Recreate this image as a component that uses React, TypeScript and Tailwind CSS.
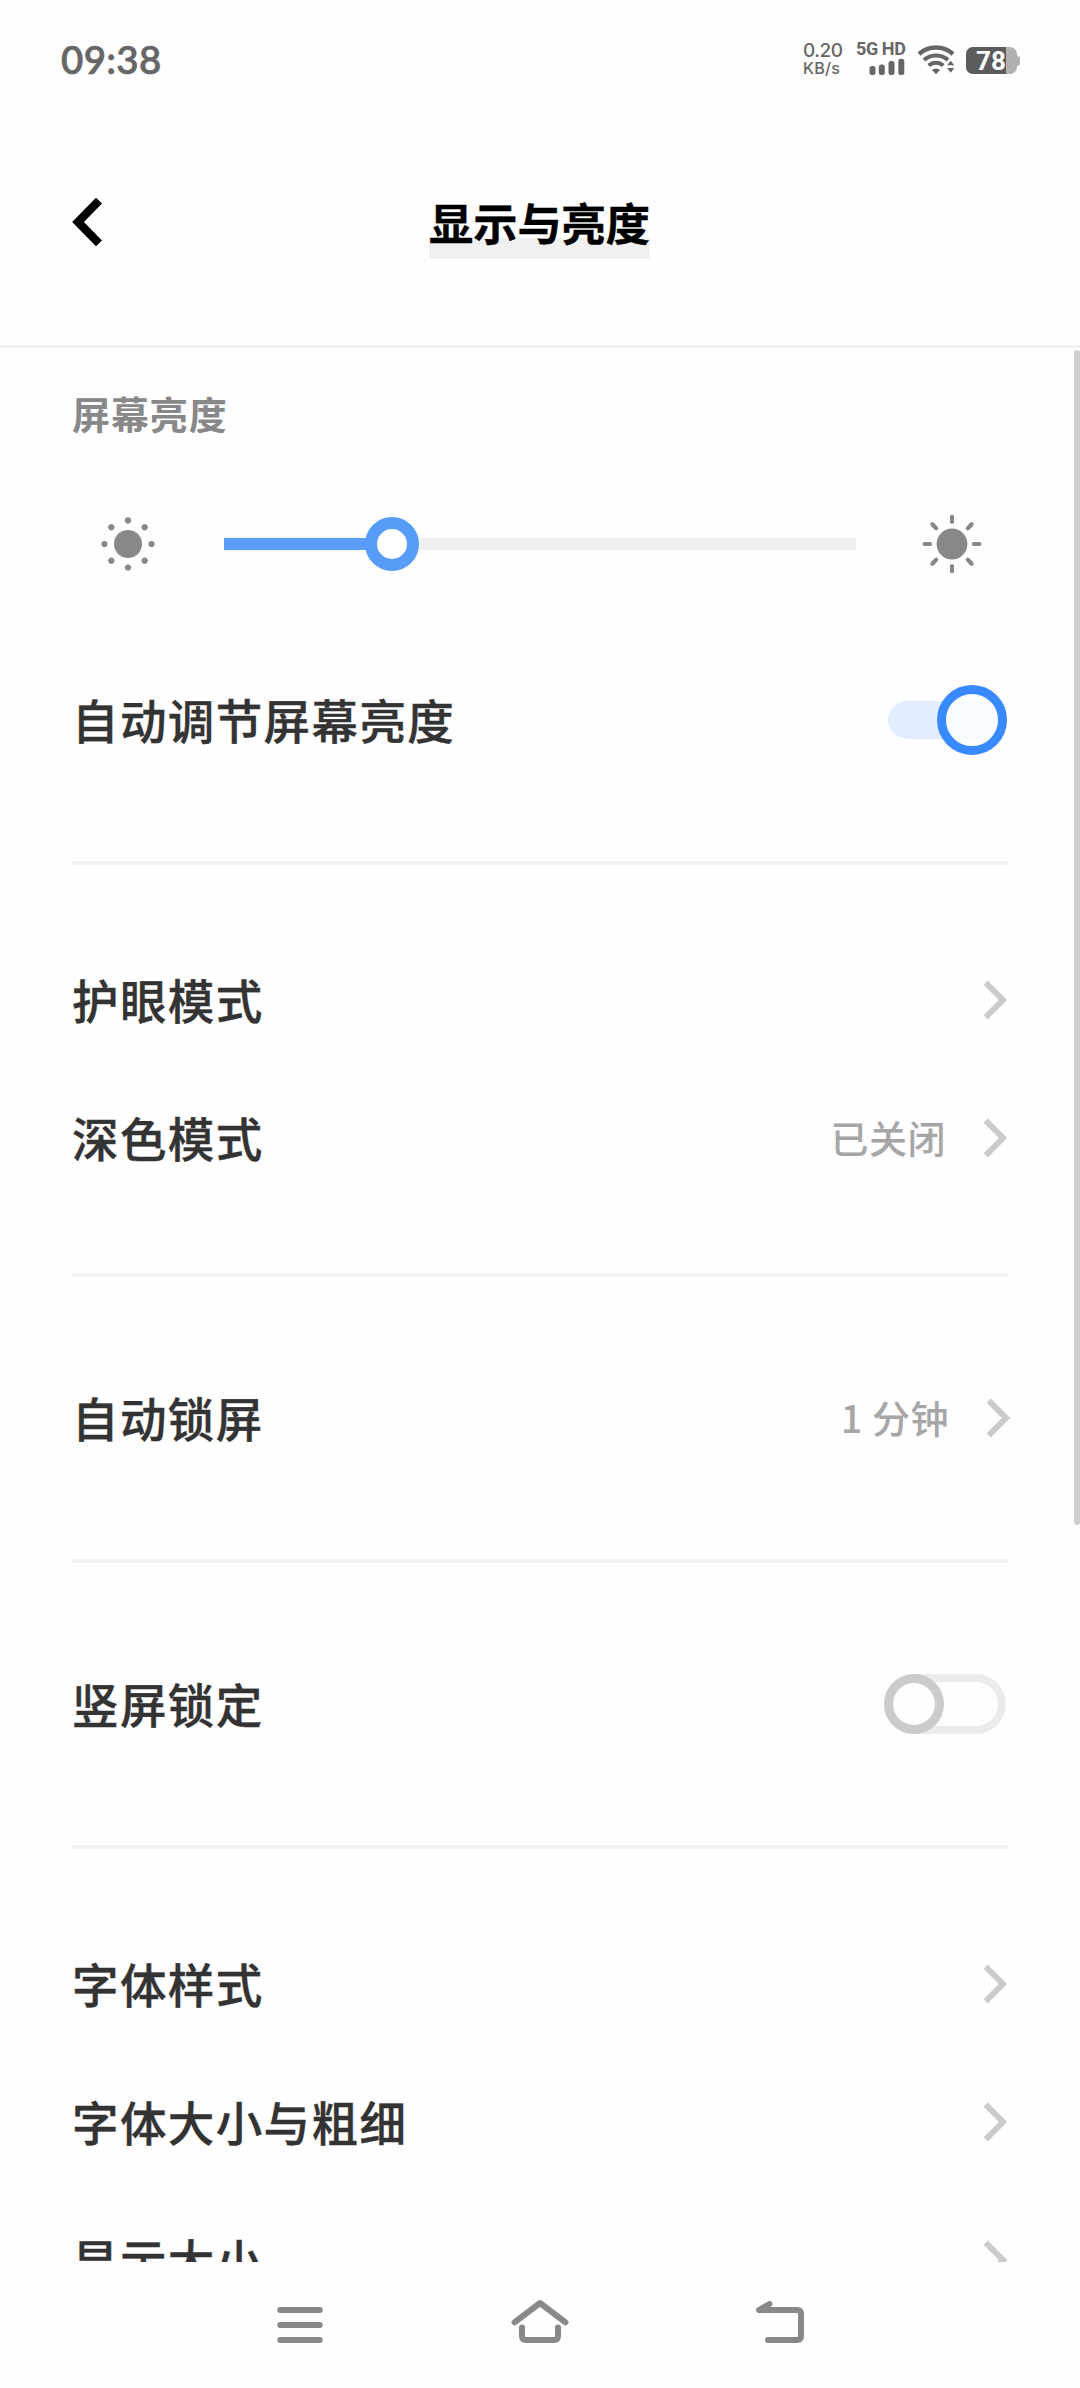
import React from 'react';
import classNames from 'clsx';

type RowProps = {
    label: string;
    value?: string;
    shifted?: boolean;
    children?: React.ReactNode;
};

function Chevron() {
    return (
        <svg width="25" height="42" viewBox="0 0 25 42" fill="none" className="shrink-0">
            <path d="M2.7 3.7L20 21L2.7 38.3" stroke="#cbcbcb" strokeWidth="6" />
        </svg>
    );
}

function Row({ label, value, shifted, children }: RowProps) {
    return (
        <div className="flex h-[138px] items-center justify-between">
            <p className="pb-[1px] text-[46.5px] leading-none font-medium tracking-[1.4px] text-[#333333] [-webkit-text-stroke:0.4px_#333333]">
                {label}
            </p>
            {children || (
                <div className={classNames('flex items-center gap-[37px]', shifted && '-mr-[3px]')}>
                    {value && (
                        <p className="pb-[2px] text-[38px] leading-none font-medium tracking-[0.5px] text-[#a6a6a6]">{value}</p>
                    )}
                    <Chevron />
                </div>
            )}
        </div>
    );
}

function Divider() {
    return <div className="h-1 bg-[#f4f4f4]" />;
}

function StatusBar() {
    return (
        <div className="flex h-[120px] justify-between px-[60px] text-[#666666]">
            <p className="mt-[35px] ml-[1px] font-['Lato'] text-[38.5px] leading-[48px] font-semibold tracking-[0.3px] [-webkit-text-stroke:0.6px_#666666]">
                09:38
            </p>
            <div className="flex">
                <div className="mt-[42px] w-[54px] font-['Inter'] font-medium">
                    <p className="-ml-[1px] text-[19px] leading-[18px] tracking-[-0.5px]">0.20</p>
                    <p className="-ml-[1px] text-[16px] leading-[16px] tracking-[0.3px]">KB/s</p>
                </div>
                <div className="mt-[40px] flex w-[60px] flex-col">
                    <p className="-ml-[2px] font-['Roboto'] text-[18px] leading-[18px] font-bold tracking-[-0.4px] whitespace-nowrap">
                        5G HD
                    </p>
                    <svg width="36" height="17" viewBox="0 0 36 17" fill="#666666" className="ml-[11px]">
                        <rect x="0.5" y="8" width="6" height="9" rx="2.5" />
                        <rect x="9.8" y="6.5" width="6" height="10.5" rx="2.5" />
                        <rect x="19.5" y="3" width="6" height="14" rx="2.5" />
                        <rect x="29.3" y="0.7" width="6" height="16.3" rx="2.5" />
                    </svg>
                </div>
                <svg width="40" height="32" viewBox="0 0 40 32" fill="none" className="mt-[44px] -ml-[1px]">
                    <path d="M2 10A25.5 25.5 0 0 1 36 10" stroke="#666666" strokeWidth="4.4" />
                    <path d="M7 16A18 18 0 0 1 31 16" stroke="#666666" strokeWidth="4" />
                    <path d="M11.7 21.5A10.8 10.8 0 0 1 26.3 21.5" stroke="#666666" strokeWidth="4" />
                    <path d="M15 26Q19 23 23 26L19 30.2Z" fill="#666666" />
                    <path d="M33.7 16.7L37.3 21.2H30.1ZM33.7 28.7L37.3 24H30.1Z" fill="#666666" stroke="#fefefe" strokeWidth="3" paintOrder="stroke" />
                </svg>
                <div className="mt-[47px] ml-[9px] flex items-center self-start">
                    <div className="flex h-[27px] w-[51px] items-center rounded-[7px] bg-[#b0b0b0]">
                        <div className="h-full w-[40px] rounded-l-[7px] bg-[#5c5c5c] pl-[10px] font-['Roboto'] text-[26px] leading-[28px] font-bold text-white">
                            78
                        </div>
                    </div>
                    <div className="h-[10px] w-[3px] rounded-r-[3px] bg-[#b0b0b0]" />
                </div>
            </div>
        </div>
    );
}

function Header() {
    return (
        <div className="grid h-[228px] grid-cols-[1fr_auto_1fr] border-b-[3px] border-[#f2f2f2]">
            <svg width="34" height="52" viewBox="0 0 34 52" fill="none" className="mt-[76px] ml-[70px]">
                <path d="M29 4.6L8 26L29 47.4" stroke="#000000" strokeWidth="8.4" />
            </svg>
            <div className="relative mt-[74px] -ml-[1px] h-[65px]">
                <div className="absolute bottom-0 left-0 h-[21px] w-full bg-[#f0f0f0]" />
                <h1 className="relative mt-[6px] text-[44.2px] leading-[44px] font-bold text-black [-webkit-text-stroke:0.4px_black]">
                    显示与亮度
                </h1>
            </div>
        </div>
    );
}

function BrightnessSlider() {
    return (
        <div className="flex h-[60px] items-center">
            <svg width="112" height="60" viewBox="0 0 112 60" fill="#888888">
                <circle cx="56" cy="30" r="14" />
                {[0, 45, 90, 135, 180, 225, 270, 315].map((angle) => (
                    <circle key={angle} cx="56" cy="6.4" r="3.1" transform={`rotate(${angle} 56 30)`} />
                ))}
            </svg>
            <div className="ml-10 flex h-[12px] w-[632px] items-center bg-[#f0f0f0]">
                <div className="h-full w-[145px] bg-[#579cf8]" />
                <div className="-ml-[4px] size-[54px] rounded-full border-[12px] border-[#579cf8] bg-white" />
            </div>
            <svg width="64" height="64" viewBox="0 0 64 64" fill="#888888" className="ml-[64px]">
                <circle cx="32" cy="32" r="15.4" />
                {[0, 45, 90, 135, 180, 225, 270, 315].map((angle) => (
                    <path
                        key={angle}
                        d={angle % 90 === 0 ? 'M32 4.7V10' : 'M32 4.2V9.6'}
                        stroke="#888888"
                        strokeWidth="4.2"
                        strokeLinecap="round"
                        transform={`rotate(${angle} 32 32)`}
                    />
                ))}
            </svg>
        </div>
    );
}

function NavBar() {
    return (
        <div className="flex h-[126px] items-center justify-center gap-[160px]">
            <svg width="80" height="60" viewBox="0 0 80 60" fill="none">
                <path d="M20.3 15H59.7M20.3 30H59.7M20.3 45H59.7" stroke="#888888" strokeWidth="6" strokeLinecap="round" />
            </svg>
            <svg width="80" height="60" viewBox="0 0 80 60" fill="none">
                <path
                    d="M14.5 27.3L40 8L65.5 27.3M22 32.5V41Q22 45 26 45H54Q58 45 58 41V32.5"
                    stroke="#888888"
                    strokeWidth="6"
                    strokeLinecap="round"
                    strokeLinejoin="round"
                />
            </svg>
            <svg width="80" height="60" viewBox="0 0 80 60" fill="none">
                <path
                    d="M29.5 9L19 15H57Q61 15 61 19V41Q61 45 57 45H28"
                    stroke="#888888"
                    strokeWidth="6"
                    strokeLinecap="round"
                    strokeLinejoin="round"
                />
            </svg>
        </div>
    );
}

function App() {
    return (
        <div className="flex h-[2388px] w-[1080px] flex-col overflow-hidden bg-[#fefefe] font-['Noto_Sans_CJK_SC',sans-serif]">
            <StatusBar />
            <Header />
            <div className="relative h-[1914px] overflow-hidden px-[72px]">
                <p className="pt-[46px] text-[38px] leading-[38px] font-bold tracking-[0.9px] text-[#888888]">屏幕亮度</p>
                <div className="mt-[82px] mb-[77px]">
                    <BrightnessSlider />
                </div>
                <Row label="自动调节屏幕亮度">
                    <div className="relative mr-2 h-[38px] w-[112px] rounded-full bg-[#e0eeff]">
                        <div className="absolute -top-[16px] left-[49px] size-[70px] rounded-full border-[9px] border-[#398aff] bg-white/80" />
                    </div>
                </Row>
                <div className="mt-[72px]">
                    <Divider />
                </div>
                <div className="py-[66px]">
                    <Row label="护眼模式" />
                    <Row label="深色模式" value="已关闭" />
                </div>
                <Divider />
                <div className="py-[72px]">
                    <Row label="自动锁屏" value="1 分钟" shifted />
                </div>
                <Divider />
                <div className="py-[72px]">
                    <Row label="竖屏锁定">
                        <div className="mr-[2px] h-[60px] w-[122px] rounded-full border-8 border-[#ebebeb]">
                            <div className="-mt-2 -ml-2 size-[60px] rounded-full border-[9px] border-[#cbcbcb] bg-[#fefefe]" />
                        </div>
                    </Row>
                </div>
                <Divider />
                <div className="pt-[66px]">
                    <Row label="字体样式" />
                    <Row label="字体大小与粗细" />
                    <Row label="显示大小" />
                </div>
                <div className="absolute top-[2px] right-0 h-[1175px] w-[6px] rounded-full bg-[#cfcfcf]" />
            </div>
            <NavBar />
        </div>
    );
}

export default App;
